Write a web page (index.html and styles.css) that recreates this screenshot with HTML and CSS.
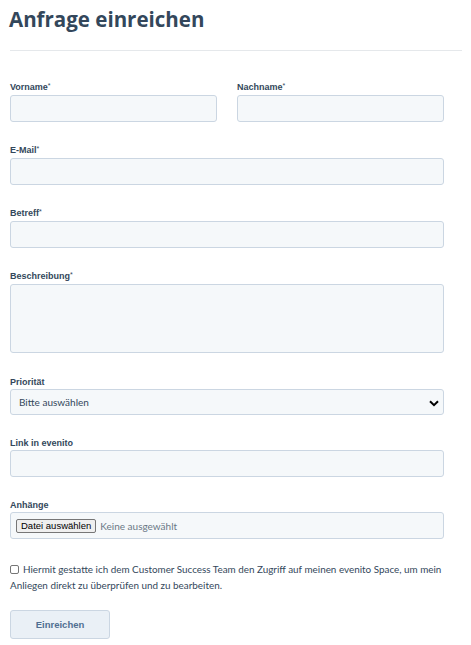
FILE: index.html
```html
<!DOCTYPE html>
<html lang="de">
<head>
  <meta charset="UTF-8">
  <title>Anfrage einreichen</title>
  <link rel="stylesheet" href="styles.css">
</head>
<body>

  <div class="request-container">
    <h1>Anfrage einreichen</h1>
    <hr class="divider">

    <form id="requestForm" class="request-form">
      <div class="row two-col">
        <div class="field">
          <label for="firstname">Vorname<span class="req">*</span></label>
          <input type="text" id="firstname" name="firstname" required>
        </div>
        <div class="field">
          <label for="lastname">Nachname<span class="req">*</span></label>
          <input type="text" id="lastname" name="lastname" required>
        </div>
      </div>

      <div class="field">
        <label for="email">E-Mail<span class="req">*</span></label>
        <input type="email" id="email" name="email" required>
      </div>

      <div class="field">
        <label for="subject">Betreff<span class="req">*</span></label>
        <input type="text" id="subject" name="subject" required>
      </div>

      <div class="field field-text">
        <label for="description">Beschreibung<span class="req">*</span></label>
        <textarea id="description" name="description" required></textarea>
      </div>

      <div class="field">
        <label for="priority">Priorität</label>
        <div class="select-wrap">
          <select id="priority" name="priority">
            <option value="">Bitte auswählen</option>
            <option value="low">Niedrig</option>
            <option value="medium">Mittel</option>
            <option value="high">Hoch</option>
          </select>
          <svg class="chevron" width="10" height="7" viewBox="0 0 10 7"><path d="M1 1.2 L5 5.2 L9 1.2" fill="none" stroke="#000" stroke-width="2"/></svg>
        </div>
      </div>

      <div class="field">
        <label for="link">Link in evenito</label>
        <input type="text" id="link" name="link">
      </div>

      <div class="field">
        <label for="files">Anhänge</label>
        <div class="file-box">
          <span class="file-btn">Datei auswählen</span>
          <span class="file-none">Keine ausgewählt</span>
        </div>
      </div>

      <label class="consent">
        <span class="box"></span>Hiermit gestatte ich dem Customer Success Team den Zugriff auf meinen evenito Space, um mein Anliegen direkt zu überprüfen und zu bearbeiten.
      </label>

      <button type="submit">Einreichen</button>
    </form>
  </div>

</body>
</html>
```

FILE: styles.css
```css
body {
  margin: 0;
  font-family: Lato, "Liberation Sans", sans-serif;
  background: #fff;
  color: #33475b;
}

.request-container {
  padding: 0 27px 0 10px;
}

h1 {
  margin: 0;
  padding-top: 6px;
  font-family: "Open Sans", sans-serif;
  font-size: 20.5px;
  font-weight: 700;
  color: #33475b;
  line-height: 26px;
  margin-left: -1px;
}

.divider {
  border: none;
  border-top: 1px solid #e5e8eb;
  margin: 18px -18px 0 0;
}

.request-form {
  padding-top: 30px;
}

.row.two-col {
  display: grid;
  grid-template-columns: 1fr 1fr;
  column-gap: 20px;
}

.field {
  margin-bottom: 22px;
}

.field-text {
  margin-bottom: 23px;
}

label {
  display: block;
  font-family: "Liberation Sans", Arial, sans-serif;
  font-size: 9px;
  font-weight: 700;
  line-height: 12px;
  color: #33475b;
  margin-bottom: 1px;
}

.req {
  font-weight: 400;
  position: relative;
  top: -2px;
  font-size: 7px;
}

input, textarea, select {
  display: block;
  width: 100%;
  box-sizing: border-box;
  height: 27px;
  background: #f5f8fa;
  border: 1px solid #cbd6e2;
  border-radius: 3px;
  font-family: Lato, sans-serif;
  font-size: 10px;
  color: #33475b;
  margin: 0;
}

textarea {
  height: 69px;
  resize: none;
}

.select-wrap {
  position: relative;
}

select {
  height: 26px;
  margin-top: 1px;
  appearance: none;
  padding: 0 8px;
}

.chevron {
  position: absolute;
  right: 5px;
  top: 11px;
  pointer-events: none;
}

.file-box {
  display: flex;
  align-items: center;
  gap: 4px;
  height: 27px;
  box-sizing: border-box;
  padding: 0 5px;
  background: #f5f8fa;
  border: 1px solid #cbd6e2;
  border-radius: 3px;
  font-size: 10px;
}

.file-btn {
  font-family: "Liberation Sans", Arial, sans-serif;
  font-size: 9.5px;
  color: #000;
  background: #efefef;
  border: 1px solid #767676;
  border-radius: 2px;
  padding: 0 4px;
  line-height: 12px;
}

.file-none {
  color: #6b7886;
}

.consent {
  font-family: Lato, sans-serif;
  font-weight: 400;
  font-size: 9.9px;
  line-height: 16px;
  color: #33475b;
  margin-top: 4px;
  margin-bottom: 0;
}

.consent .box {
  display: inline-block;
  width: 7px;
  height: 7px;
  border: 1px solid #767676;
  border-radius: 2px;
  margin-right: 4px;
  vertical-align: -1px;
}

button {
  margin-top: 17px;
  width: 100px;
  height: 29px;
  background: #eaf0f6;
  border: 1px solid #cbd6e2;
  border-radius: 3px;
  font-family: "Liberation Sans", Arial, sans-serif;
  font-size: 9.5px;
  font-weight: 700;
  color: #506e91;
  cursor: pointer;
}
```
